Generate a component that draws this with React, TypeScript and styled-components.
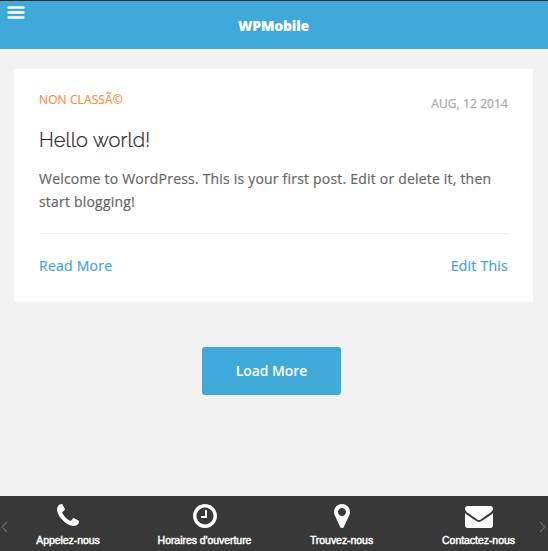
import React from "react";
import styled, { createGlobalStyle } from "styled-components";

const GlobalStyle = createGlobalStyle`
  * { box-sizing: border-box; }
  html, body { margin: 0; padding: 0; }
  body {
    background: #f2f2f2;
    font-family: "Open Sans", "Noto Sans", sans-serif;
    overflow: hidden;
  }
`;

const Page = styled.div`
  display: flex;
  flex-direction: column;
  width: 548px;
  height: 551px;
  background: #f2f2f2;
`;

const Header = styled.header`
  display: grid;
  grid-template-columns: 32px 1fr 32px;
  height: 49px;
  flex: none;
  border-top: 1px solid #222b30;
  background: #3fa9da;
`;

const MenuButton = styled.button`
  display: flex;
  align-items: flex-start;
  padding: 5px 0 0 7px;
  border: 0;
  background: none;
`;

const Title = styled.h1`
  margin: 0;
  padding-right: 1px;
  color: #fff;
  font-size: 14px;
  font-weight: 800;
  line-height: 50px;
  letter-spacing: -0.2px;
  text-align: center;
`;

const Main = styled.main`
  display: flex;
  flex: 1;
  flex-direction: column;
  padding: 20px 15px 0 14px;
`;

const Card = styled.article`
  display: flex;
  flex-direction: column;
  height: 233px;
  padding: 0 25px;
  background: #fff;
`;

const Meta = styled.div`
  display: flex;
  justify-content: space-between;
  height: 56px;
  padding-top: 20px;
  font-size: 12px;
  line-height: 22px;
`;

const Category = styled.span`
  color: #f98d45;
  letter-spacing: 0.1px;
  -webkit-text-stroke: 0.15px currentColor;
`;

const PostDate = styled.time`
  padding-top: 4px;
  color: #aaa;
  letter-spacing: 0.1px;
  -webkit-text-stroke: 0.25px currentColor;
`;

const PostTitle = styled.h2`
  margin: 0;
  height: 42px;
  color: #222;
  font-family: Raleway, Lato, sans-serif;
  font-size: 20px;
  font-weight: 300;
  line-height: 30px;
  letter-spacing: 0.12px;
  white-space: nowrap;
  -webkit-text-stroke: 0.2px currentColor;
`;

const Excerpt = styled.p`
  margin: 0;
  height: 66px;
  color: #666;
  font-size: 14px;
  line-height: 23px;
  letter-spacing: 0.2px;
  -webkit-text-stroke: 0.2px currentColor;
`;

const CardFooter = styled.div`
  display: flex;
  justify-content: space-between;
  padding-top: 20px;
  border-top: 1px solid #f0f0f0;
`;

const CardLink = styled.a`
  color: #45a3d4;
  font-size: 14px;
  line-height: 24px;
  letter-spacing: 0.25px;
  -webkit-text-stroke: 0.2px currentColor;
`;

const LoadButton = styled.button`
  align-self: center;
  width: 139px;
  height: 48px;
  margin: 45px 4px 0 0;
  padding: 0 0 2px;
  border: 0;
  border-radius: 3px;
  background: #3fa9da;
  color: #fff;
  font-family: inherit;
  font-size: 14px;
  font-weight: 600;
  letter-spacing: -0.1px;
`;

const TabBar = styled.nav`
  position: relative;
  display: grid;
  grid-template-columns: 136px repeat(3, 137px);
  height: 55px;
  flex: none;
  background: #383838;
`;

const Tab = styled.a`
  display: flex;
  flex-direction: column;
  align-items: center;
  padding-top: 6px;
  color: #fff;
`;

const TabLabel = styled.span`
  margin-top: 3px;
  font-family: "Liberation Sans", Arial, sans-serif;
  font-size: 10.5px;
  line-height: 14px;
  white-space: nowrap;
  letter-spacing: -0.05px;
  -webkit-text-stroke: 0.45px #fff;
`;

const Arrow = styled.svg<{ $side: "left" | "right" }>`
  position: absolute;
  top: 25px;
  ${({ $side }) => ($side === "left" ? "left: 1px" : "right: 2px")};
  fill: none;
  stroke: #666;
  stroke-width: 1.4;
`;

const tabs = [
  {
    label: "Appelez-nous",
    path: "M1600 1240q0 27-10 70.5t-21 68.5q-21 50-122 106-94 51-186 51-27 0-53-3.5t-57.5-12.5-47-14.5-55.5-20.5-49-18q-98-35-175-83-127-79-264-216t-216-264q-48-77-83-175-3-9-18-49t-20.5-55.5-14.5-47-12.5-57.5-3.5-53q0-92 51-186 56-101 106-122 25-11 68.5-21t70.5-10q14 0 21 3 18 6 53 76 11 19 30 54t35 63.5 31 53.5q3 4 17.5 25t21.5 35.5 7 28.5q0 20-28.5 50t-62 55-62 53-28.5 46q0 9 5 22.5t8.5 20.5 14 24 11.5 19q76 137 174 235t235 174q2 1 19 11.5t24 14 20.5 8.5 22.5 5q18 0 46-28.5t53-62 55-62 50-28.5q14 0 28.5 7t35.5 21.5 25 17.5q25 15 53.5 31t63.5 35 54 30q70 35 76 53 3 7 3 21z",
  },
  {
    label: "Horaires d'ouverture",
    path: "M1024 544v448q0 14-9 23t-23 9h-320q-14 0-23-9t-9-23v-64q0-14 9-23t23-9h224v-352q0-14 9-23t23-9h64q14 0 23 9t9 23zm416 352q0-148-73-273t-198-198-273-73-273 73-198 198-73 273 73 273 198 198 273 73 273-73 198-198 73-273zm224 0q0 209-103 385.5t-279.5 279.5-385.5 103-385.5-103-279.5-279.5-103-385.5 103-385.5 279.5-279.5 385.5-103 385.5 103 279.5 279.5 103 385.5z",
  },
  {
    label: "Trouvez-nous",
    path: "M1152 640q0-106-75-181t-181-75-181 75-75 181 75 181 181 75 181-75 75-181zm256 0q0 109-33 179l-364 774q-16 33-47.5 52t-67.5 19-67.5-19-46.5-52l-365-774q-33-70-33-179 0-212 150-362t362-150 362 150 150 362z",
  },
  {
    label: "Contactez-nous",
    path: "M1792 710v794q0 66-47 113t-113 47h-1472q-66 0-113-47t-47-113v-794q44 49 101 87 362 246 497 345 57 42 92.5 65.5t94.5 48 110 24.5h2q51 0 110-24.5t94.5-48 92.5-65.5q170-123 498-345 57-39 100-87zm0-294q0 79-49 151t-122 123q-376 261-468 325-10 7-42.5 31t-54 38.5-52 32.5-57.5 27-50 9h-2q-23 0-50-9t-57.5-27-52-32.5-54-38.5-42.5-31q-91-64-262-182.5t-205-142.5q-62-42-117-115.5t-55-136.5q0-78 41.5-130t118.5-52h1472q65 0 112.5 47t47.5 113z",
  },
];

export default function App() {
  return (
    <Page>
      <GlobalStyle />
      <Header>
        <MenuButton aria-label="Menu">
          <svg width="18" height="14" viewBox="0 0 18 14" fill="#fff">
            <rect x="0.5" y="0.2" width="17" height="2.6" rx="0.8" />
            <rect x="0.5" y="5.2" width="17" height="2.6" rx="0.8" />
            <rect x="0.5" y="10.2" width="17" height="2.6" rx="0.8" />
          </svg>
        </MenuButton>
        <Title>WPMobile</Title>
      </Header>
      <Main>
        <Card>
          <Meta>
            <Category>NON CLASSÃ©</Category>
            <PostDate>AUG, 12 2014</PostDate>
          </Meta>
          <PostTitle>Hello world!</PostTitle>
          <Excerpt>
            Welcome to WordPress. This is your first post. Edit or delete it, then
            start blogging!
          </Excerpt>
          <CardFooter>
            <CardLink>Read More</CardLink>
            <CardLink>Edit This</CardLink>
          </CardFooter>
        </Card>
        <LoadButton>Load More</LoadButton>
      </Main>
      <TabBar>
        {tabs.map((tab) => (
          <Tab key={tab.label}>
            <svg width="28" height="28" viewBox="0 0 1792 1792" fill="currentColor">
              <path d={tab.path} />
            </svg>
            <TabLabel>{tab.label}</TabLabel>
          </Tab>
        ))}
        <Arrow $side="left" width="7" height="12" viewBox="0 0 7 12">
          <path d="M6 1 1 6l5 5" />
        </Arrow>
        <Arrow $side="right" width="7" height="12" viewBox="0 0 7 12">
          <path d="m1 1 5 5-5 5" />
        </Arrow>
      </TabBar>
    </Page>
  );
}
